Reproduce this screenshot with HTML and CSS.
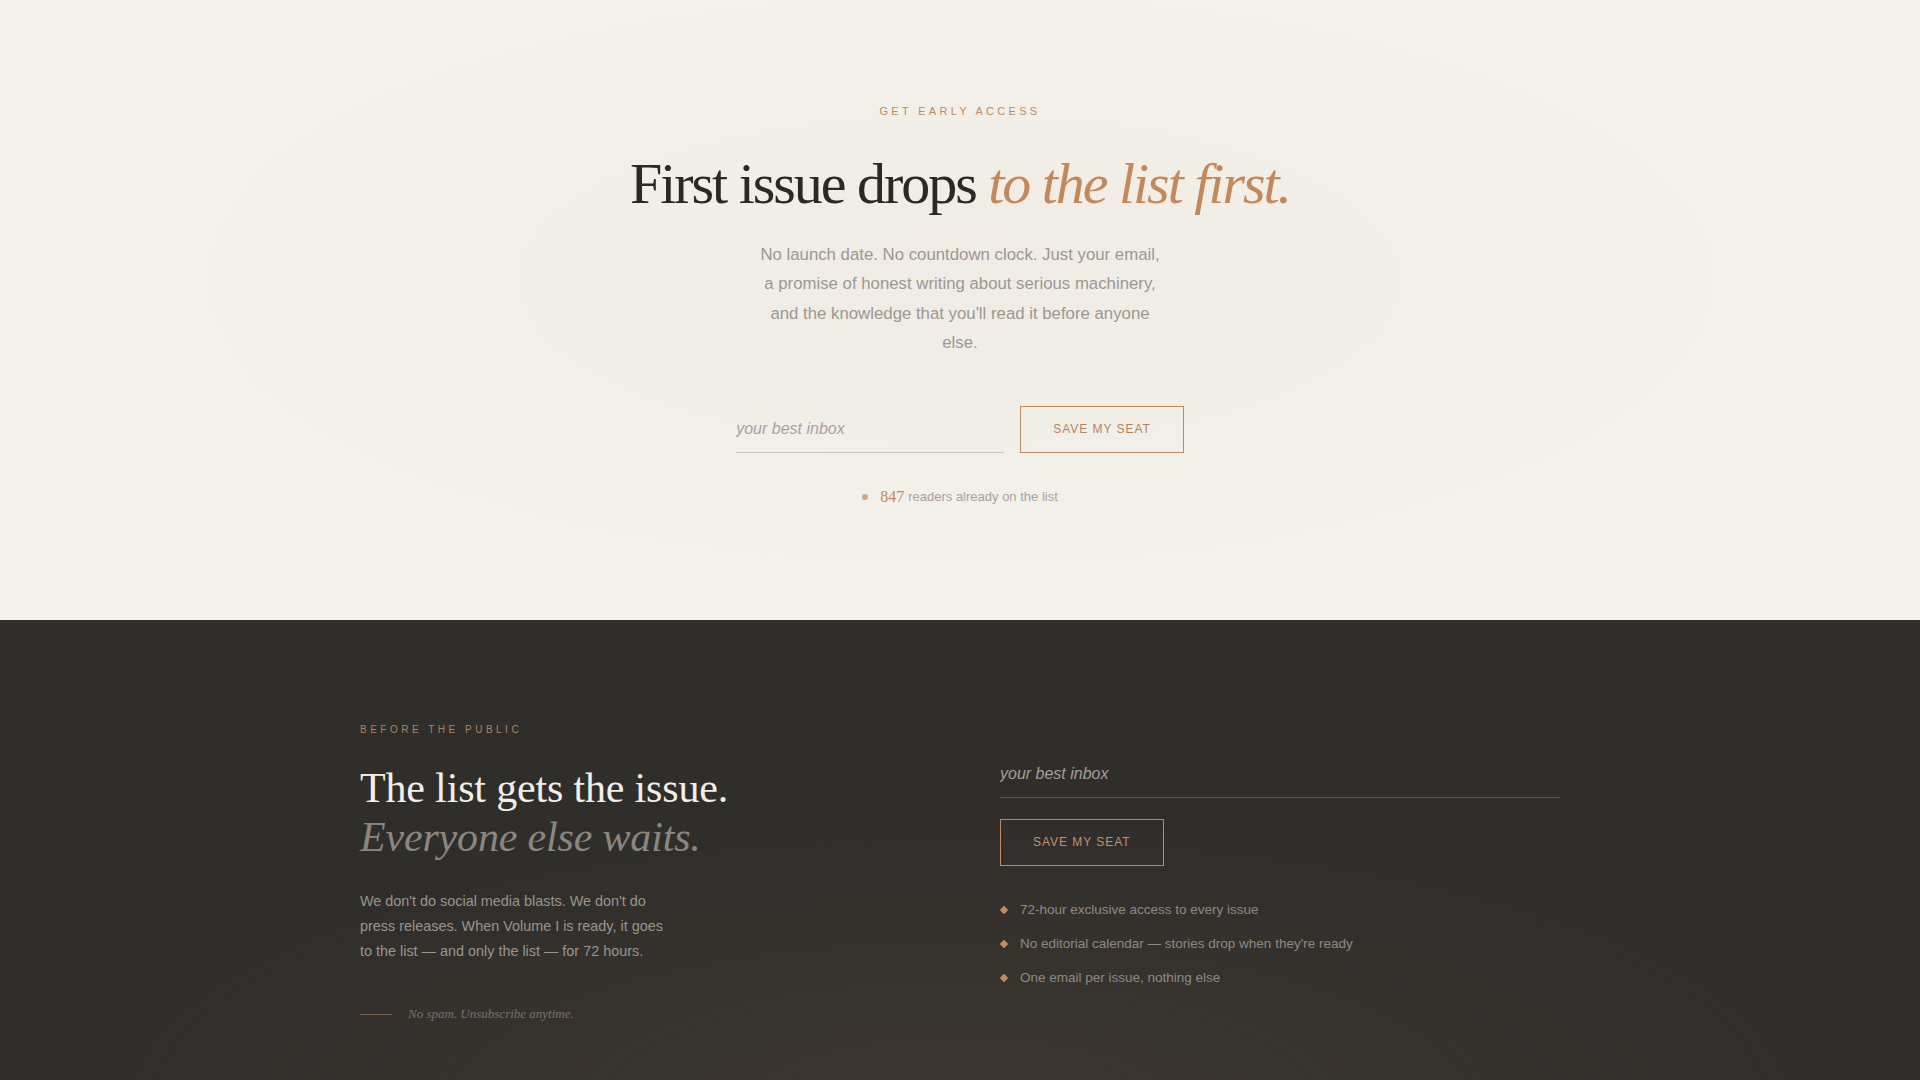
FILE: index.html
```html
<!DOCTYPE html>
<html lang="en">
<head>
    <meta charset="UTF-8">
    <meta name="viewport" content="width=device-width, initial-scale=1.0">
    <title>Volume I — Early Access</title>
    <link rel="stylesheet" href="styles.css">
</head>
<body>
    <section class="hero">
        <p class="eyebrow">Get early access</p>
        <h1 class="hero-title">First issue drops <em>to the list first.</em></h1>
        <p class="hero-text">No launch date. No countdown clock. Just your email, a promise of honest writing about serious machinery, and the knowledge that you'll read it before anyone else.</p>
        <form class="signup signup-inline">
            <input type="email" name="email" placeholder="your best inbox">
            <button type="submit">Save my seat</button>
        </form>
        <p class="count"><span class="count-dot"></span><span class="count-num">847</span> readers already on the list</p>
    </section>

    <section class="promise">
        <div class="promise-inner">
            <div class="promise-copy">
                <p class="eyebrow eyebrow-dark">Before the public</p>
                <h2 class="promise-title">The list gets the issue.<br><em>Everyone else waits.</em></h2>
                <p class="promise-text">We don't do social media blasts. We don't do press releases. When Volume I is ready, it goes to the list — and only the list — for 72 hours.</p>
                <p class="note"><span class="note-rule"></span>No spam. Unsubscribe anytime.</p>
            </div>
            <div class="promise-form">
                <form class="signup signup-stacked">
                    <input type="email" name="email" placeholder="your best inbox">
                    <button type="submit">Save my seat</button>
                </form>
                <ul class="perks">
                    <li>72-hour exclusive access to every issue</li>
                    <li>No editorial calendar — stories drop when they're ready</li>
                    <li>One email per issue, nothing else</li>
                </ul>
            </div>
        </div>
    </section>
</body>
</html>
```
FILE: styles.css
```css
* {
    box-sizing: border-box;
}

body {
    margin: 0;
    min-height: 100vh;
    display: flex;
    flex-direction: column;
    font-family: "Liberation Sans", Arial, sans-serif;
    background-color: #f4f1eb;
}

p, h1, h2, ul {
    margin: 0;
}

em {
    font-style: italic;
}

.eyebrow {
    font-size: 11px;
    line-height: 1.2;
    letter-spacing: 0.3em;
    text-transform: uppercase;
    color: #c4895a;
}

/* top: centred call to action */
.hero {
    display: flex;
    flex-direction: column;
    align-items: center;
    text-align: center;
    padding: 105px 20px 113px;
    background:
        radial-gradient(ellipse 60% 70% at 50% 45%, rgba(226, 220, 210, 0.25), transparent 70%),
        #f4f1eb;
}

.hero-title {
    margin-top: 34px;
    font-family: "Liberation Serif", "Times New Roman", serif;
    font-weight: 400;
    font-size: 58px;
    line-height: 1.1;
    letter-spacing: -0.035em;
    color: #2b2825;
}

.hero-title em {
    color: #c4895a;
}

.hero-text {
    margin-top: 24px;
    max-width: 410px;
    font-size: 16.8px;
    line-height: 1.75;
    color: #9d9791;
}

.signup input {
    font-family: inherit;
    font-size: 16px;
    line-height: 18px;
    padding: 14px 0;
    border: none;
    border-bottom: 1px solid #c9c3bb;
    background: transparent;
    outline: none;
}

.signup input::placeholder {
    font-style: italic;
    color: #a9a29b;
}

.signup button {
    font-family: inherit;
    font-size: 12px;
    letter-spacing: 0.08em;
    text-transform: uppercase;
    height: 47px;
    padding: 0 32px;
    border: 1px solid #c4895a;
    background: transparent;
    color: #b9835a;
    cursor: pointer;
}

.signup-inline {
    display: flex;
    gap: 16px;
    margin-top: 48px;
}

.signup-inline input {
    width: 268px;
}

.count {
    display: flex;
    align-items: center;
    margin-top: 34px;
    font-size: 13px;
    line-height: 20px;
    color: #a8a29c;
}

.count-dot {
    width: 6px;
    height: 6px;
    border-radius: 50%;
    background-color: #d2a67f;
    margin-right: 12px;
}

.count-num {
    font-family: "Liberation Serif", "Times New Roman", serif;
    font-size: 16px;
    color: #c4895a;
    margin-right: 4px;
}

/* bottom: two column pitch */
.promise {
    flex: 1;
    padding: 104px 20px 60px;
    background:
        radial-gradient(ellipse 45% 60% at 50% 105%, rgba(72, 62, 52, 0.55), transparent 100%),
        #302e2b;
}

.promise-inner {
    max-width: 1200px;
    margin: 0 auto;
    display: grid;
    grid-template-columns: 1fr 1fr;
    column-gap: 80px;
    align-items: center;
}

.eyebrow-dark {
    font-size: 10px;
    letter-spacing: 0.35em;
    color: #b3825b;
}

.promise-title {
    margin-top: 28px;
    font-family: "Liberation Serif", "Times New Roman", serif;
    font-weight: 400;
    font-size: 42px;
    line-height: 1.17;
    letter-spacing: -0.004em;
    color: #f2eee7;
}

.promise-title em {
    color: #8b8680;
}

.promise-text {
    margin-top: 27px;
    max-width: 310px;
    font-size: 14.4px;
    line-height: 1.75;
    color: #9b958e;
}

.note {
    display: flex;
    align-items: center;
    margin-top: 42px;
    font-family: "Liberation Serif", "Times New Roman", serif;
    font-style: italic;
    font-size: 13px;
    line-height: 16px;
    color: #78726c;
}

.note-rule {
    width: 32px;
    height: 1px;
    background-color: #7d5f47;
    margin-right: 16px;
}

.signup-stacked {
    display: flex;
    flex-direction: column;
    align-items: flex-start;
    gap: 21px;
}

.signup-stacked input {
    width: 100%;
    border-bottom-color: #57524d;
    color: #e8e3dc;
}

.signup-stacked input::placeholder {
    color: #a49e97;
}

.signup-stacked button {
    color: #c4916a;
}

.perks {
    list-style: none;
    padding: 0;
    margin-top: 27px;
}

.perks li {
    display: flex;
    align-items: center;
    padding: 7px 0;
    font-size: 13.5px;
    line-height: 20px;
    color: #8f8984;
}

.perks li::before {
    content: "";
    width: 6px;
    height: 6px;
    margin: 0 13px 0 1px;
    background-color: #c98b5b;
    transform: rotate(45deg);
}
```
